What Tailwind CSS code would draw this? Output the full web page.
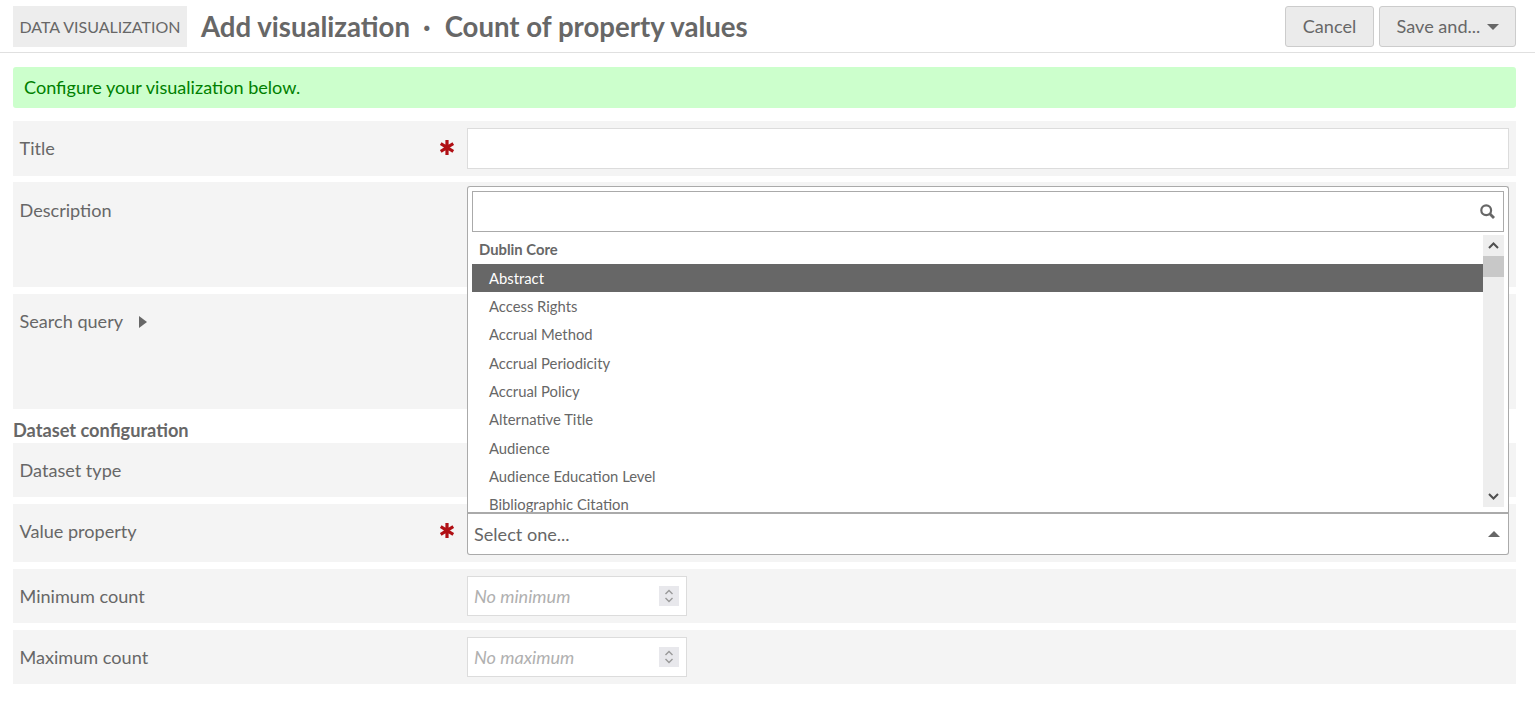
<!DOCTYPE html>
<html lang="en">
<head>
  <meta charset="UTF-8" />
  <title>Add visualization</title>
  <script src="https://cdn.jsdelivr.net/npm/@tailwindcss/browser@4"></script>
</head>
<body class="bg-white text-[#676767] font-['Lato',sans-serif] text-[18.1px] leading-[27px] h-[701px] overflow-hidden">

  <!-- Header -->
  <header class="h-[53px] border-b border-[#e0e0e0] pl-[13px] pr-[19px] flex items-center">
    <span class="h-[41px] w-[174px] bg-[#ededed] flex items-center justify-center text-[16px] mt-[1px]">DATA VISUALIZATION</span>
    <h1 class="ml-[14px] text-[27.6px] font-bold flex items-center mt-[1px]">
      <span>Add visualization</span>
      <span class="ml-[13px] mr-[14px]">·</span>
      <span>Count of property values</span>
    </h1>
    <div class="ml-auto flex gap-[5px] mt-[1px]">
      <button class="h-[41px] w-[89px] bg-[#ebebeb] border border-[#cccccc] rounded-[3px]">Cancel</button>
      <button class="h-[41px] w-[137px] bg-[#ebebeb] border border-[#cccccc] rounded-[3px] flex items-center justify-center gap-[7px] pl-[1px]">
        Save and...
        <svg width="12" height="6" viewBox="0 0 12 6"><path d="M0 0h12L6 6z" fill="#676767"/></svg>
      </button>
    </div>
  </header>

  <main class="pl-[13px] w-[1516px]">
    <div class="mt-[14px] h-[41px] bg-[#ccffcc] text-[#008000] rounded-[3px] flex items-center px-[11px]">Configure your visualization below.</div>

    <!-- Title -->
    <div class="mt-[13px] h-[55px] bg-[#f4f4f4] flex items-center pl-[6.5px] pr-[7px]">
      <label class="w-[420px]">Title</label>
      <span class="w-[27.5px]"><svg class="-mt-[2px]" width="14" height="15" viewBox="0 0 14 15"><path d="M7 0v15M.7 3.6l12.6 7.8M13.3 3.6L.7 11.4" stroke="#b00f14" stroke-width="3.2"/></svg></span>
      <input type="text" class="flex-1 h-[41px] bg-white border border-[#dcdcdc]" />
    </div>

    <!-- Description -->
    <div class="mt-[6px] h-[105px] bg-[#f4f4f4] pl-[6.5px] pt-[15px]">
      <label>Description</label>
    </div>

    <!-- Search query -->
    <div class="mt-[7px] h-[115px] bg-[#f4f4f4] pl-[6.5px] pt-[14px] flex items-start gap-[16px]">
      <label>Search query</label>
      <svg class="mt-[8px]" width="8" height="12" viewBox="0 0 8 12"><path d="M0 0l8 6-8 6z" fill="#676767"/></svg>
    </div>

    <h3 class="mt-[10px] h-[24px] text-[18.2px] font-bold leading-[23px]">Dataset configuration</h3>

    <!-- Dataset type -->
    <div class="h-[54px] bg-[#f4f4f4] flex items-center pl-[6.5px]">
      <label>Dataset type</label>
    </div>

    <!-- Value property -->
    <div class="mt-[7px] h-[58px] bg-[#f4f4f4] flex items-start pl-[6.5px] pr-[7px] relative">
      <label class="w-[420px] mt-[14px]">Value property</label>
      <span class="w-[27.5px] mt-[19px]"><svg width="14" height="15" viewBox="0 0 14 15"><path d="M7 0v15M.7 3.6l12.6 7.8M13.3 3.6L.7 11.4" stroke="#b00f14" stroke-width="3.2"/></svg></span>
      <div class="flex-1 h-[43px] mt-[8px] bg-white border border-[#aaaaaa] border-t-2 rounded-b-[3px] flex items-center justify-between pl-[6px] pr-[8px]">
        <span>Select one...</span>
        <svg width="12" height="6" viewBox="0 0 12 6"><path d="M0 6h12L6 0z" fill="#676767"/></svg>
      </div>

      <!-- Open dropdown -->
      <div class="absolute left-[454px] right-[7px] bottom-[50px] h-[326px] bg-white border border-b-0 border-[#aaaaaa] rounded-t-[3px] pt-[4px] px-[4px] flex flex-col overflow-hidden">
        <div class="h-[41px] shrink-0 border border-[#aaaaaa] flex items-center justify-end pr-[8px]">
          <svg width="15" height="15" viewBox="0 0 15 15" fill="none" stroke="#676767"><circle cx="6.2" cy="6.2" r="4.9" stroke-width="2.2"/><path d="M9.8 9.8l4.2 4.2" stroke-width="2.8"/></svg>
        </div>
        <div class="flex flex-1 min-h-0 mt-[4px] text-[14.8px] leading-[22.2px]">
          <ul class="flex-1 overflow-hidden">
            <li class="h-[28px] px-[7px] font-bold flex items-center -mt-[1px] mb-[1px]">Dublin Core</li>
            <li class="h-[28px] px-[17px] flex items-center bg-[#676767] text-white">Abstract</li>
            <li class="h-[28.33px] px-[17px] flex items-center">Access Rights</li>
            <li class="h-[28.33px] px-[17px] flex items-center">Accrual Method</li>
            <li class="h-[28.33px] px-[17px] flex items-center">Accrual Periodicity</li>
            <li class="h-[28.33px] px-[17px] flex items-center">Accrual Policy</li>
            <li class="h-[28.33px] px-[17px] flex items-center">Alternative Title</li>
            <li class="h-[28.33px] px-[17px] flex items-center">Audience</li>
            <li class="h-[28.33px] px-[17px] flex items-center">Audience Education Level</li>
            <li class="h-[28.33px] px-[17px] flex items-center">Bibliographic Citation</li>
          </ul>
          <div class="w-[21px] h-[272px] -mt-[1px] bg-[#eeeeee] flex flex-col items-center">
            <div class="h-[21px] flex items-center"><svg width="11" height="7" viewBox="0 0 11 7" fill="none"><path d="M1 6l4.5-4.5L10 6" stroke="#505050" stroke-width="2"/></svg></div>
            <div class="h-[21px] w-full bg-[#c8c8c8]"></div>
            <div class="mt-auto h-[21px] flex items-center"><svg width="11" height="7" viewBox="0 0 11 7" fill="none"><path d="M1 1l4.5 4.5L10 1" stroke="#505050" stroke-width="2"/></svg></div>
          </div>
        </div>
      </div>
    </div>

    <!-- Minimum count -->
    <div class="mt-[7px] h-[54px] bg-[#f4f4f4] flex items-center pl-[6.5px]">
      <label class="w-[447.5px]">Minimum count</label>
      <div class="w-[220px] h-[40px] bg-white border border-[#dcdcdc] flex items-center justify-between pl-[6px] pr-[7px]">
        <span class="italic text-[#b0b0b0]">No minimum</span>
        <span class="w-[20px] h-[20px] bg-[#e8e8ec] flex items-center justify-center"><svg width="10" height="16" viewBox="0 0 10 16" fill="none" stroke="#999999" stroke-width="1.4"><path d="M1.5 6L5 2.5 8.5 6M1.5 10L5 13.5 8.5 10"/></svg></span>
      </div>
    </div>

    <!-- Maximum count -->
    <div class="mt-[7px] h-[54px] bg-[#f4f4f4] flex items-center pl-[6.5px]">
      <label class="w-[447.5px]">Maximum count</label>
      <div class="w-[220px] h-[40px] bg-white border border-[#dcdcdc] flex items-center justify-between pl-[6px] pr-[7px]">
        <span class="italic text-[#b0b0b0]">No maximum</span>
        <span class="w-[20px] h-[20px] bg-[#e8e8ec] flex items-center justify-center"><svg width="10" height="16" viewBox="0 0 10 16" fill="none" stroke="#999999" stroke-width="1.4"><path d="M1.5 6L5 2.5 8.5 6M1.5 10L5 13.5 8.5 10"/></svg></span>
      </div>
    </div>
  </main>

</body>
</html>
